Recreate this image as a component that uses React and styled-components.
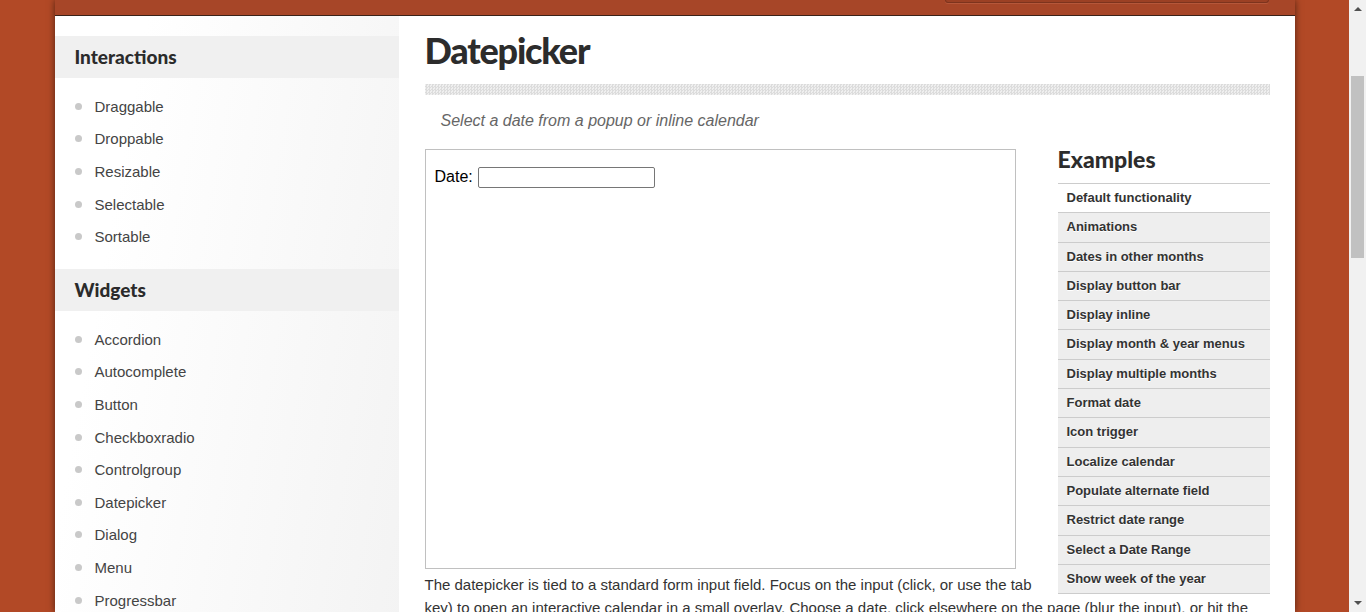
import React from "react";
import styled, { createGlobalStyle } from "styled-components";

const GlobalStyle = createGlobalStyle`
    html, body {
        margin: 0;
        padding: 0;
        height: 100%;
        overflow: hidden;
    }
    body {
        background: #b24926;
        font-family: "Liberation Sans", Arial, sans-serif;
    }
`;

const interactions = ["Draggable", "Droppable", "Resizable", "Selectable", "Sortable"];
const widgets = [
    "Accordion",
    "Autocomplete",
    "Button",
    "Checkboxradio",
    "Controlgroup",
    "Datepicker",
    "Dialog",
    "Menu",
    "Progressbar",
    "Selectmenu",
];
const examples = [
    "Default functionality",
    "Animations",
    "Dates in other months",
    "Display button bar",
    "Display inline",
    "Display month & year menus",
    "Display multiple months",
    "Format date",
    "Icon trigger",
    "Localize calendar",
    "Populate alternate field",
    "Restrict date range",
    "Select a Date Range",
    "Show week of the year",
];

const Screen = styled.div`
    display: flex;
    height: 612px;
    overflow: hidden;
`;

const Page = styled.div`
    flex: 1;
    min-width: 0;
`;

const Container = styled.div`
    width: 1240px;
    margin: 0 auto;
    background: #fff;
    box-shadow: 0 0 7px rgba(0, 0, 0, 0.55);
    height: 612px;
`;

const Header = styled.div`
    height: 15px;
    background: #a74628;
    border-bottom: 1px solid #3a2218;
    display: flex;
    justify-content: flex-end;
    padding-right: 26px;
`;

const SearchEdge = styled.div`
    width: 322px;
    height: 2px;
    background: #9b4024;
    border: 1px solid #7d331d;
    border-top: none;
    border-radius: 0 0 8px 8px;
    box-shadow: 0 1px 0 #b5573a;
`;

const Body = styled.div`
    display: flex;
    align-items: flex-start;
`;

const Sidebar = styled.aside`
    width: 344px;
    flex-shrink: 0;
    padding-top: 20px;
    min-height: 600px;
    background: linear-gradient(100deg, #ffffff 20%, #f3f3f3 100%);
`;

const SectionTitle = styled.h3`
    margin: 0;
    height: 42px;
    line-height: 42px;
    padding-left: 20px;
    background: #f0f0f0;
    font-family: "Lato", "Open Sans", sans-serif;
    font-weight: 900;
    font-size: 19px;
    color: #2b2b2b;
`;

const NavList = styled.ul`
    list-style: none;
    margin: 0;
    padding: 12px 0 16px 20px;
`;

const NavItem = styled.li`
    display: flex;
    align-items: center;
    height: 32.6px;
    font-size: 15px;
    color: #444;

    &::before {
        content: "";
        width: 7px;
        height: 7px;
        border-radius: 50%;
        background: #c9c9c9;
        margin: 0 13px 0 0;
    }
`;

const Main = styled.main`
    flex: 1;
    padding: 0 25px 0 26px;
`;

const Title = styled.h1`
    margin: 0;
    padding-top: 12px;
    height: 46px;
    font-family: "Lato", "Open Sans", sans-serif;
    font-weight: 900;
    font-size: 36px;
    letter-spacing: -1.2px;
    line-height: 44px;
    color: #2c2c2c;
`;

const Hatch = styled.div`
    height: 11px;
    margin-top: 10px;
    background-color: #efefef;
    background-image: repeating-conic-gradient(#dcdcdc 0 25%, #efefef 0 50%);
    background-size: 3px 3px;
`;

const Subtitle = styled.p`
    margin: 0;
    padding: 16px 0 0 16px;
    height: 38px;
    font-style: italic;
    font-size: 16px;
    line-height: 20px;
    color: #666;
`;

const Content = styled.div``;

const Examples = styled.div`
    float: right;
    width: 212px;
    margin-left: 24px;
`;

const ExamplesTitle = styled.h3`
    margin: 0;
    height: 34px;
    font-family: "Lato", "Open Sans", sans-serif;
    font-weight: 900;
    font-size: 23px;
    line-height: 18px;
    padding-top: 1px;
    box-sizing: border-box;
    color: #2c2c2c;
`;

const ExampleList = styled.ul`
    list-style: none;
    margin: 0;
    padding: 0;
    border-top: 1px solid #ccc;
`;

const ExampleItem = styled.li`
    padding: 7px 9px;
    height: 14.3px;
    line-height: 14px;
    font-size: 13px;
    font-weight: 700;
    color: #333;
    text-shadow: 0 1px 0 #fff;
    background: ${(p) => (p.$active ? "#fff" : "#eee")};
    border-bottom: 1px solid #ccc;
`;

const DemoFrame = styled.div`
    box-sizing: border-box;
    width: 591px;
    height: 420px;
    border: 1px solid #c0c0c0;
    padding: 17px 9px;
    margin-bottom: 4px;
    display: flex;
    align-items: flex-start;
    gap: 5px;
    font-size: 16px;
    color: #000;
`;

const DateLabel = styled.label`
    line-height: 20px;
`;

const DateInput = styled.input`
    width: 177px;
    height: 21px;
    box-sizing: border-box;
    border: 1px solid #767676;
    border-radius: 2px;
    padding: 1px 2px;
    font-size: 13px;
`;

const Para = styled.p`
    margin: 0;
    font-size: 15px;
    line-height: 23px;
    color: #333;
`;

const Scrollbar = styled.div`
    width: 17px;
    flex-shrink: 0;
    background: #f1f1f1;
    display: flex;
    flex-direction: column;
    align-items: center;
`;

const ScrollArrow = styled.div`
    height: 17px;
    width: 17px;
    display: flex;
    align-items: center;
    justify-content: center;
`;

const Track = styled.div`
    flex: 1;
    width: 100%;
    padding-top: 59px;
    box-sizing: border-box;
`;

const Thumb = styled.div`
    width: 13px;
    margin-left: 2px;
    height: 182px;
    background: #c1c1c1;
`;

const Arrow = ({ up }) => (
    <svg width="8" height="5" viewBox="0 0 8 5">
        <path d={up ? "M0 5 L4 1 L8 5 Z" : "M0 0 L4 4 L8 0 Z"} fill="#505050" />
    </svg>
);

export default function App() {
    return (
        <>
            <GlobalStyle />
            <Screen>
                <Page>
                    <Container>
                        <Header>
                            <SearchEdge />
                        </Header>
                        <Body>
                            <Sidebar>
                                <SectionTitle>Interactions</SectionTitle>
                                <NavList>
                                    {interactions.map((name) => (
                                        <NavItem key={name}>{name}</NavItem>
                                    ))}
                                </NavList>
                                <SectionTitle>Widgets</SectionTitle>
                                <NavList>
                                    {widgets.map((name) => (
                                        <NavItem key={name}>{name}</NavItem>
                                    ))}
                                </NavList>
                            </Sidebar>
                            <Main>
                                <Title>Datepicker</Title>
                                <Hatch />
                                <Subtitle>Select a date from a popup or inline calendar</Subtitle>
                                <Content>
                                    <Examples>
                                        <ExamplesTitle>Examples</ExamplesTitle>
                                        <ExampleList>
                                            {examples.map((name, i) => (
                                                <ExampleItem key={name} $active={i === 0}>
                                                    {name}
                                                </ExampleItem>
                                            ))}
                                        </ExampleList>
                                    </Examples>
                                    <DemoFrame>
                                        <DateLabel>Date:</DateLabel>
                                        <DateInput type="text" />
                                    </DemoFrame>
                                    <Para>
                                        The datepicker is tied to a standard form input field. Focus on the
                                        input (click, or use the tab key) to open an interactive calendar in a
                                        small overlay. Choose a date, click elsewhere on the page (blur the
                                        input), or hit the Esc key to close. If a date is chosen, feedback is
                                        shown as the input's value.
                                    </Para>
                                </Content>
                            </Main>
                        </Body>
                    </Container>
                </Page>
                <Scrollbar>
                    <ScrollArrow>
                        <Arrow up />
                    </ScrollArrow>
                    <Track>
                        <Thumb />
                    </Track>
                    <ScrollArrow>
                        <Arrow />
                    </ScrollArrow>
                </Scrollbar>
            </Screen>
        </>
    );
}
